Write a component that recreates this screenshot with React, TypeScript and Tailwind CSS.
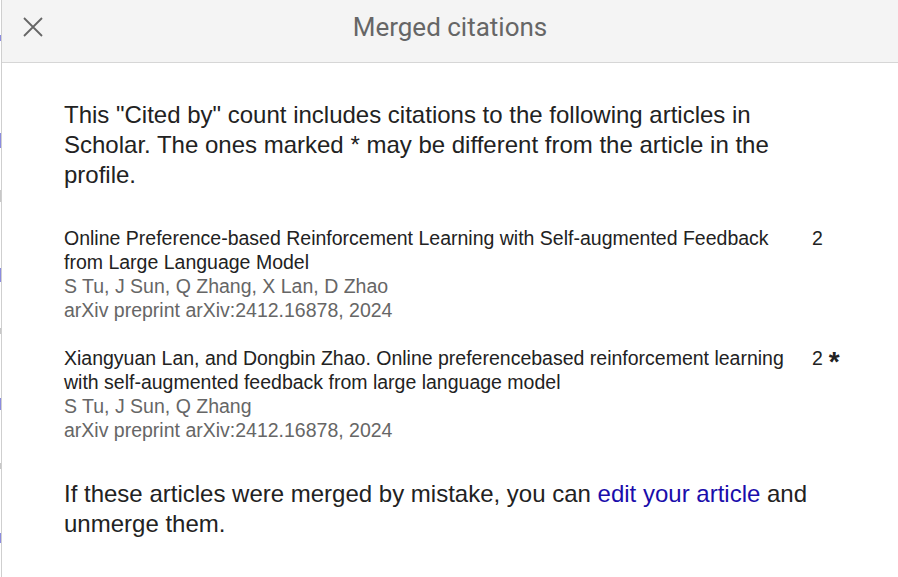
import React from 'react';

const ARTICLES = [
  {
    title: 'Online Preference-based Reinforcement Learning with Self-augmented Feedback from Large Language Model',
    authors: 'S Tu, J Sun, Q Zhang, X Lan, D Zhao',
    venue: 'arXiv preprint arXiv:2412.16878, 2024',
    count: 2,
    starred: false,
  },
  {
    title: 'Xiangyuan Lan, and Dongbin Zhao. Online preferencebased reinforcement learning with self-augmented feedback from large language model',
    authors: 'S Tu, J Sun, Q Zhang',
    venue: 'arXiv preprint arXiv:2412.16878, 2024',
    count: 2,
    starred: true,
  },
];

// bits of the page peeking out behind the dialog
const EDGE_MARKS = [
  { top: 'top-[35px] h-[6px]', color: 'bg-[#8c8ce0]' },
  { top: 'top-[133px] h-[15px]', color: 'bg-[#8c8ce0]' },
  { top: 'top-[190px] h-[12px]', color: 'bg-[#c8c8c8]' },
  { top: 'top-[268px] h-[14px]', color: 'bg-[#8c8ce0]' },
  { top: 'top-[328px] h-[6px]', color: 'bg-[#c8c8c8]' },
  { top: 'top-[398px] h-[12px]', color: 'bg-[#8c8ce0]' },
  { top: 'top-[463px] h-[6px]', color: 'bg-[#c8c8c8]' },
  { top: 'top-[533px] h-[10px]', color: 'bg-[#8c8ce0]' },
];

function CloseIcon() {
  return (
    <svg width="20" height="20" viewBox="0 0 20 20" fill="none">
      <path d="M1 1L19 19M19 1L1 19" stroke="#666" strokeWidth="1.8" />
    </svg>
  );
}

export default function App() {
  return (
    <div className="relative flex h-[577px] w-[898px] overflow-hidden bg-white font-[family-name:Liberation_Sans,Arial,sans-serif]">
      <div className="relative w-[1px] shrink-0 bg-white">
        {EDGE_MARKS.map((m, i) => (
          <span key={i} className={`absolute left-0 w-[1px] ${m.top} ${m.color}`} />
        ))}
      </div>

      <div className="flex min-w-0 flex-1 flex-col border-l border-[#cfcfcf]">
        {/* header */}
        <div className="relative flex h-[63px] shrink-0 items-center justify-center border-b border-[#d6d6d6] bg-[#f4f4f4]">
          <button className="absolute left-[21px] top-[17px] flex h-[20px] w-[20px] items-center justify-center">
            <CloseIcon />
          </button>
          <h1 className="pb-[8px] font-[family-name:Roboto,Arial,sans-serif] text-[26px] font-normal text-[#666]">
            Merged citations
          </h1>
        </div>

        {/* body */}
        <div className="pl-[62px] pr-[68px] pt-[37px]">
          <p className="text-[24px] leading-[30px] text-[#222]">
            This "Cited by" count includes citations to the following articles in Scholar. The ones marked * may be
            different from the article in the profile.
          </p>

          <div className="mt-[36px] flex flex-col gap-[24px]">
            {ARTICLES.map((a, i) => (
              <div key={i} className="flex items-start text-[19.5px] leading-[24px]">
                <div className="w-[735px] shrink-0">
                  <div className="text-[#222]">{a.title}</div>
                  <div className="text-[#666]">{a.authors}</div>
                  <div className="text-[#666]">{a.venue}</div>
                </div>
                <div className="ml-[13px] flex items-start text-[#222]">
                  <span>{a.count}</span>
                  {a.starred && <span className="ml-[6px] text-[28px] font-bold leading-[32px]">*</span>}
                </div>
              </div>
            ))}
          </div>

          <p className="mt-[37px] text-[24px] leading-[30px] text-[#222]">
            If these articles were merged by mistake, you can{' '}
            <a href="#" className="text-[#1a0dab]">
              edit your article
            </a>{' '}
            and unmerge them.
          </p>
        </div>
      </div>
    </div>
  );
}
